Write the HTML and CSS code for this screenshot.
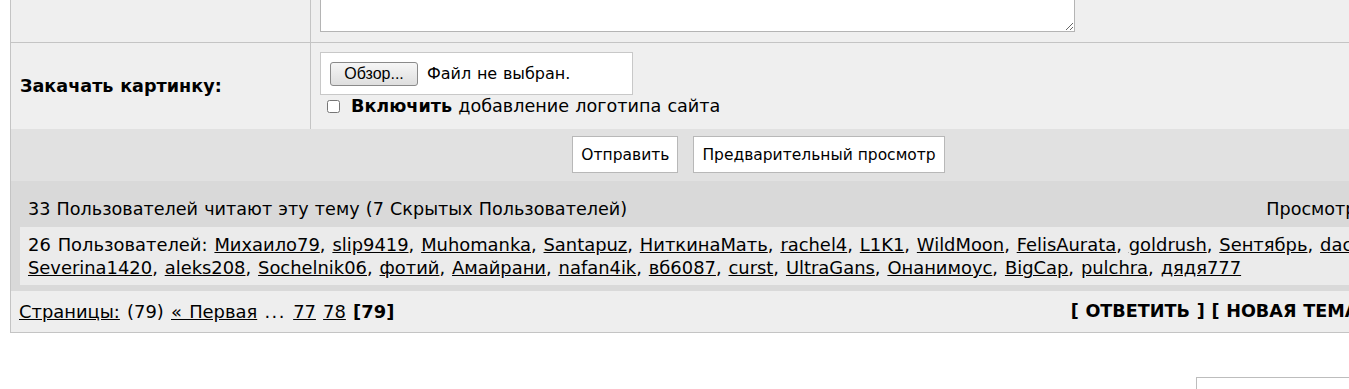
FILE: index.html
```html
<!DOCTYPE html>
<html lang="ru">
<head>
    <meta charset="UTF-8">
    <meta name="viewport" content="width=device-width, initial-scale=1.0">
    <title>Ответ в тему</title>
    <link rel="stylesheet" href="styles.css">
</head>
<body>

    <div class="board">
        <form class="post-form">
            <table class="form-table">
                <tr class="row-message">
                    <td class="label"></td>
                    <td class="field"><textarea class="message" name="message"></textarea></td>
                </tr>
                <tr class="row-upload">
                    <td class="label"><b>Закачать картинку:</b></td>
                    <td class="field">
                        <div class="file-box">
                            <button type="button" class="browse">Обзор...</button>
                            <span class="file-name">Файл не выбран.</span>
                        </div>
                        <label class="logo-check"><input type="checkbox" name="logo"><b>Включить</b>&nbsp;добавление логотипа сайта</label>
                    </td>
                </tr>
                <tr class="row-submit">
                    <td colspan="2">
                        <div class="buttons">
                            <button type="submit" class="btn">Отправить</button>
                            <button type="button" class="btn">Предварительный просмотр</button>
                        </div>
                    </td>
                </tr>
            </table>
        </form>

        <div class="online">
            <div class="online-head">
                <span>33 Пользователей читают эту тему (7 Скрытых Пользователей)</span>
                <span>Просмотров темы: 1234</span>
            </div>
            <div class="online-list">
                26 Пользователей: <a href="#">Михаило79</a>, <a href="#">slip9419</a>, <a href="#">Muhomanka</a>, <a href="#">Santapuz</a>, <a href="#">НиткинаМать</a>, <a href="#">rachel4</a>, <a href="#">L1K1</a>, <a href="#">WildMoon</a>, <a href="#">FelisAurata</a>, <a href="#">goldrush</a>, <a href="#">Sентябрь</a>, <a href="#">dacha</a>, <a href="#">Kira</a>, <a href="#">Severina1420</a>, <a href="#">aleks208</a>, <a href="#">Sochelnik06</a>, <a href="#">фотий</a>, <a href="#">Амайрани</a>, <a href="#">nafan4ik</a>, <a href="#">вб6087</a>, <a href="#">curst</a>, <a href="#">UltraGans</a>, <a href="#">Онанимоус</a>, <a href="#">BigCap</a>, <a href="#">pulchra</a>, <a href="#">дядя777</a>
            </div>
        </div>

        <div class="pages-bar">
            <div class="pages">
                <a href="#">Страницы:</a> (79) <a href="#">« Первая</a> <span class="dots">...</span> <a href="#">77</a> <a href="#">78</a> <b>[79]</b>
            </div>
            <div class="actions">
                <b>[ ОТВЕТИТЬ ] [ НОВАЯ ТЕМА ] [ ОПРОСЫ ]</b>
            </div>
        </div>
    </div>

    <div class="jump-box"></div>

</body>
</html>
```

FILE: styles.css
```css
body {
    font-family: "DejaVu Sans", Verdana, sans-serif;
    font-size: 17.6px;
    word-spacing: 0.6px;
    margin: 0;
    padding: 0;
    color: #000;
    background-color: #fff;
    overflow: hidden;
}

a {
    color: #000;
}

.board {
    width: 1495px;
    margin: -77px 0 0 10px;
    border: 1px solid #c4c4c4;
    border-top: none;
}

.post-form {
    margin: 0;
}

.form-table {
    width: 100%;
    border-collapse: collapse;
    table-layout: fixed;
    background-color: #efefef;
}

.form-table td {
    padding: 0;
}

.label {
    width: 290px;
    padding-left: 9px !important;
    border-right: 1px solid #c4c4c4;
    vertical-align: middle;
}

.row-message td {
    border-bottom: 1px solid #c4c4c4;
}

.row-message .field {
    padding: 9px 9px 10px !important;
}

.message {
    display: block;
    width: 755px;
    height: 100px;
    box-sizing: border-box;
    border: 1px solid #b4b4b4;
    background-color: #fff;
    margin: 0;
}

.row-upload .field {
    padding: 9px 9px 11px !important;
}

.file-box {
    width: 313px;
    height: 43px;
    box-sizing: border-box;
    border: 1px solid #c8c8c8;
    background-color: #fff;
    padding: 9px 9px 0;
    display: flex;
    align-items: flex-start;
}

.browse {
    font-family: "Liberation Sans", Arial, sans-serif;
    font-size: 16px;
    height: 24px;
    width: 88px;
    padding: 0;
    border: 1px solid #8a8a8a;
    border-radius: 3px;
    background: linear-gradient(#f6f6f6, #dedede);
    color: #000;
}

.file-name {
    font-size: 16px;
    margin-left: 9px;
    line-height: 24px;
}

.logo-check {
    display: flex;
    align-items: center;
    line-height: 23px;
}

.logo-check input {
    width: 13px;
    height: 13px;
    margin: 0 11px 0 7px;
}

.row-submit td {
    background-color: #e1e1e1;
    padding: 7px 0 8px !important;
}

.buttons {
    display: flex;
    justify-content: center;
    gap: 15px;
}

.btn {
    font-family: "DejaVu Sans", Verdana, sans-serif;
    font-size: 15.5px;
    height: 37px;
    padding: 0 8px;
    background-color: #fff;
    border: 1px solid #b8b8b8;
    color: #000;
}

.online {
    background-color: #d9d9d9;
    padding: 6px 9px;
}

.online-head {
    display: flex;
    justify-content: space-between;
    padding: 11px 8px 6px;
    line-height: 23px;
}

.online-list {
    background-color: #ebebeb;
    padding: 6px 8px;
    font-size: 17.9px;
    word-spacing: 1.2px;
    line-height: 23px;
}

.pages-bar {
    background-color: #eeeeee;
    display: flex;
    justify-content: space-between;
    padding: 9px 8px;
    line-height: 23px;
}

.pages {
    font-size: 17.9px;
    word-spacing: 1.5px;
}

.dots {
    letter-spacing: 1.5px;
}

.jump-box {
    width: 311px;
    height: 40px;
    margin: 44px 0 0 1196px;
    border: 1px solid #bdbdbd;
    box-sizing: border-box;
}
```
